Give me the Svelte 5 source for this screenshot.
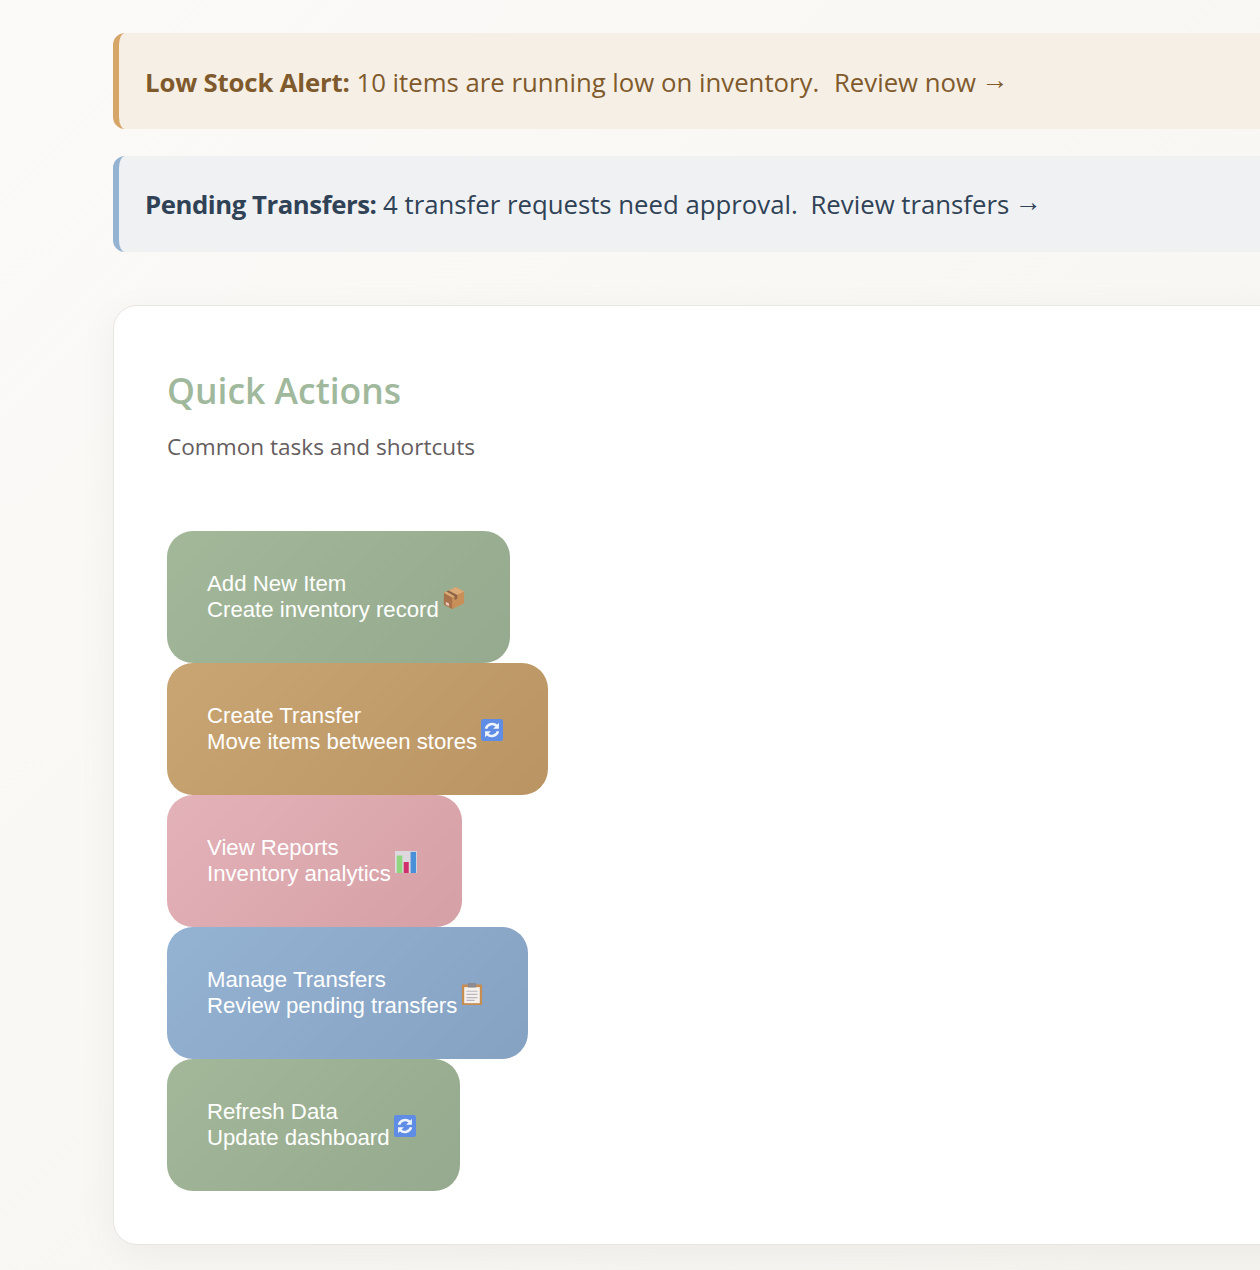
<script>
  const actions = [
    { title: 'Add New Item', sub: 'Create inventory record', icon: 'box', tone: 'sage' },
    { title: 'Create Transfer', sub: 'Move items between stores', icon: 'sync', tone: 'sand' },
    { title: 'View Reports', sub: 'Inventory analytics', icon: 'chart', tone: 'rose' },
    { title: 'Manage Transfers', sub: 'Review pending transfers', icon: 'clip', tone: 'blue' },
    { title: 'Refresh Data', sub: 'Update dashboard', icon: 'sync', tone: 'sage' }
  ];
</script>

<div class="page">
  <div class="alert warn">
    <strong>Low Stock Alert:</strong> 10 items are running low on inventory. <span class="link">Review now <span class="arrow">→</span></span>
  </div>
  <div class="alert info">
    <strong>Pending Transfers:</strong> 4 transfer requests need approval. <span class="link">Review transfers <span class="arrow">→</span></span>
  </div>
  <section class="card">
    <h2>Quick Actions</h2>
    <p>Common tasks and shortcuts</p>
    <div class="actions">
      {#each actions as a}
        <button class="action {a.tone}">
          <span class="text"><span>{a.title}</span><span>{a.sub}</span></span>
          <svg class="icon {a.icon}" viewBox="0 0 24 24" aria-hidden="true">
            {#if a.icon === 'box'}
              <path d="M1 6.5 14 0l9 5v13L10 24l-9-5z" fill="#c98f58"/>
              <path d="M1 6.5 14 0l9 5-13 6.5z" fill="#dcaa76"/>
              <path d="M1 6.5l9 5V24l-9-5z" fill="#a8734a"/>
              <path d="M6 3.8l9.5 5v4l-2.8 1.4v-4.2L3.8 5z" fill="#8a6248"/>
              <path d="M3 16l3.5 2v3l-3.5-2z" fill="#efc9c0"/>
            {:else if a.icon === 'sync'}
              <rect x="0" y="0" width="24" height="24" rx="2.5" fill="#5f8ce4"/>
              <path d="M5.4 10.6A7 7 0 0 1 17.2 7.6" fill="none" stroke="#eef3fc" stroke-width="2.8"/>
              <path d="M19.6 4v6.6h-6.4z" fill="#eef3fc"/>
              <path d="M18.6 13.4A7 7 0 0 1 6.8 16.4" fill="none" stroke="#eef3fc" stroke-width="2.8"/>
              <path d="M4.4 20v-6.6h6.4z" fill="#eef3fc"/>
            {:else if a.icon === 'chart'}
              <rect x="0" y="0" width="24" height="24" fill="#dcd8de"/>
              <rect x="2" y="5" width="6" height="19" fill="#8fd67e"/>
              <rect x="9.5" y="12" width="5.5" height="12" fill="#cf2f6a"/>
              <rect x="17" y="1" width="6" height="23" fill="#4a90d9"/>
            {:else}
              <rect x="1" y="1.5" width="22" height="22.5" rx="1" fill="#c68d52"/>
              <rect x="3.5" y="4.5" width="17" height="17.5" fill="#f4f1ee"/>
              <rect x="7.5" y="0" width="9" height="5" rx="1" fill="#8b8a90"/>
              <path d="M6 9h12M6 12.5h12M6 16h12M6 19h9" stroke="#b9b7bd" stroke-width="1.3"/>
            {/if}
          </svg>
        </button>
      {/each}
    </div>
  </section>
</div>

<style>
  :global(body) {
    margin: 0;
    background: linear-gradient(135deg, #fbfaf8 0%, #f7f5f0 100%);
    min-height: 1270px;
    overflow: hidden;
  }
  .page {
    width: 1400px;
    margin-left: 113px;
    padding-top: 33px;
    font-family: "Open Sans", "Noto Sans", sans-serif;
  }
  .alert {
    box-sizing: border-box;
    height: 96px;
    margin-bottom: 27px;
    padding-left: 26px;
    border-left: 6px solid;
    border-radius: 12px;
    line-height: 99px;
    font-size: 25.75px;
    white-space: pre-wrap;
  }
  .warn {
    background: #f6efe5;
    border-color: #d6a568;
    color: #7f5a2c;
  }
  .info {
    background: #eff1f3;
    border-color: #94b2d2;
    color: #2f4256;
    line-height: 97px;
  }
  .link { margin-left: 8px; }
  .info .link { margin-left: 6px; }
  .arrow {
    font-family: "Liberation Sans", sans-serif;
    font-size: 27px;
    vertical-align: 3px;
    line-height: 1;
    margin-left: -1.5px;
  }
  strong { font-weight: 700; letter-spacing: -0.17px; }
  .info strong { letter-spacing: -0.45px; }
  .card {
    box-sizing: border-box;
    height: 940px;
    margin-top: 53px;
    padding: 54px 53px;
    background: #fff;
    border: 1px solid #e8e6e1;
    border-radius: 24px;
    box-shadow: 0 10px 40px rgba(0, 0, 0, 0.05);
  }
  h2 {
    margin: 0;
    font-size: 35.5px;
    font-weight: 600;
    line-height: 60px;
    color: #a0b89c;
  }
  p {
    margin: 11px 0 0;
    font-size: 22.6px;
    line-height: 32px;
    color: #655d5e;
  }
  .actions {
    margin-top: 68px;
    display: flex;
    flex-direction: column;
    align-items: flex-start;
  }
  .action {
    height: 132px;
    padding: 0 40px;
    border: 0;
    border-radius: 26px;
    display: flex;
    align-items: center;
    gap: 4px;
    color: #fff;
    font-family: "Liberation Sans", Arial, sans-serif;
    font-size: 22.2px;
    text-align: left;
  }
  .text { display: flex; flex-direction: column; line-height: 26px; }
  .icon { width: 22px; height: 22px; flex: none; margin: 2px 4.85px 0 0; filter: blur(0.5px); }
  .sage { background: linear-gradient(135deg, #a3b899, #95aa8e); }
  .sand { background: linear-gradient(135deg, #c9a574, #ba9563); }
  .rose { background: linear-gradient(135deg, #e3b2b8, #d5a0a6); }
  .blue { background: linear-gradient(135deg, #94b2d2, #86a2c2); }
</style>
